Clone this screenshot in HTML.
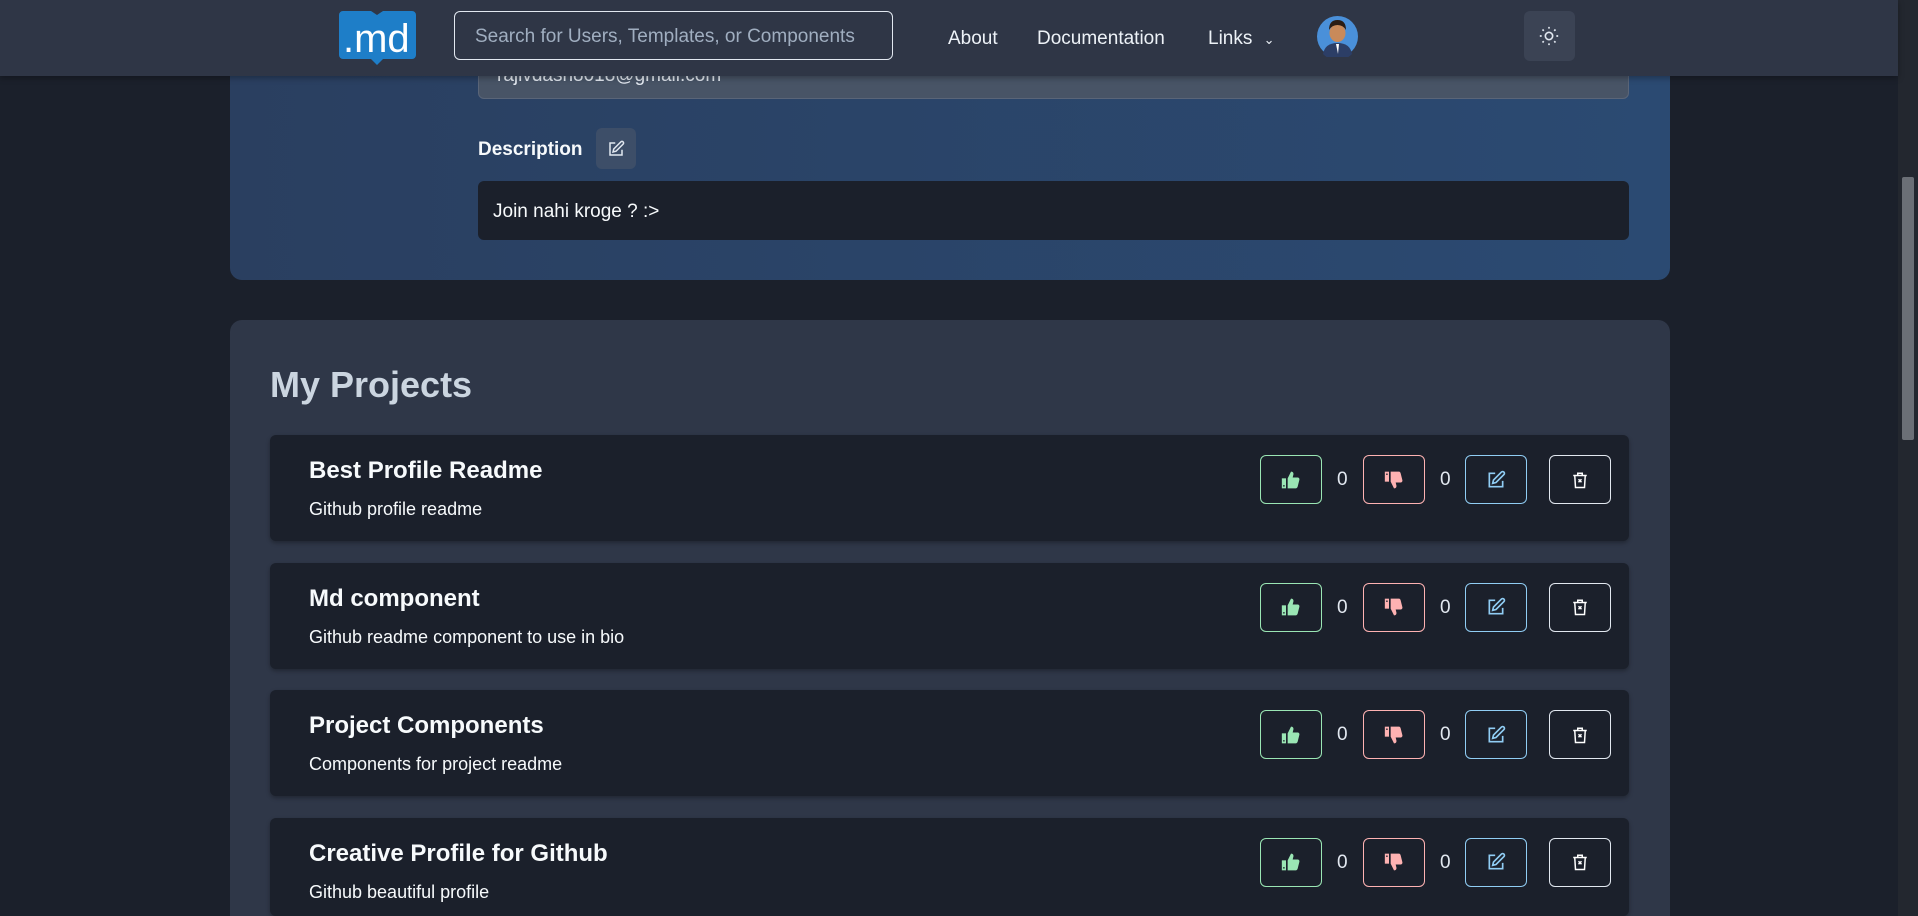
<!DOCTYPE html>
<html style="height:916px;overflow:hidden"><head><meta charset="utf-8"><style>
*{box-sizing:border-box;margin:0;padding:0}
html,body{overflow:hidden}
body{width:1918px;height:916px;overflow:hidden;background:#1b202b;font-family:"Liberation Sans",sans-serif;color:#fff;position:relative}
.hdr{position:absolute;left:0;top:0;width:1898px;height:76px;background:#2f3646;z-index:5;box-shadow:0 2px 6px rgba(0,0,0,.3)}
.abs{position:absolute}
.search{left:454px;top:11px;width:439px;height:49px;border:1.5px solid #e2e8f0;border-radius:6px;color:#a0aec0;font-size:19px;line-height:50px;padding-left:20px}
.nav{top:28px;font-size:19px;color:#edf2f7}
.theme{left:1524px;top:11px;width:51px;height:50px;background:#3b4354;border-radius:6px}
.card1{left:230px;top:-20px;width:1440px;height:300px;border-radius:12px;background:linear-gradient(90deg,#2a3f60,#2b4a72)}
.email{left:478px;top:40px;width:1151px;height:59px;background:#485466;border:1px solid #5a6578;border-radius:6px;font-size:19px;color:#e2e8f0;padding:24px 0 0 18px}
.card2{left:230px;top:320px;width:1440px;height:596px;border-radius:12px 12px 0 0;background:#2f3748}
.row{position:absolute;left:270px;width:1359px;height:106px;background:#1b202b;border-radius:6px;box-shadow:0 2px 4px rgba(0,0,0,.3)}
.row h3{position:absolute;left:39px;top:22px;font-size:24px;font-weight:bold;color:#f7fafc}
.row p{position:absolute;left:39px;top:64px;font-size:18px;color:#f7fafc}
.b{position:absolute;top:20px;width:62px;height:49px;border-radius:6px;border:1.2px solid;display:flex;align-items:center;justify-content:center}
.n{position:absolute;top:34px;font-size:19px;color:#e2e8f0}
.sb{left:1898px;top:0;width:20px;height:916px;background:#23272f}
.th{left:1902px;top:177px;width:12px;height:263px;background:#6b6f76;border-radius:2px}
</style></head><body>
<div class="abs card1"></div>
<div class="abs email">rajivdash8018@gmail.com</div>
<div class="abs" style="left:478px;top:139px;font-size:19px;font-weight:bold;color:#f7fafc">Description</div>
<div class="abs" style="left:596px;top:128px;width:40px;height:41px;background:#3d4e68;border-radius:6px;display:flex;align-items:center;justify-content:center"><svg width="18" height="18" viewBox="0 0 24 24" fill="none" stroke="#e2e8f0" stroke-width="2"><path d="M11 4H4v16h16v-7"/><path d="M18.5 2.5a2.1 2.1 0 013 3L12 15l-4 1 1-4z"/></svg></div>
<div class="abs" style="left:478px;top:181px;width:1151px;height:59px;background:#1b202b;border-radius:6px;font-size:19px;color:#f7fafc;padding:20px 0 0 15px">Join nahi kroge ? :&gt;</div>
<div class="abs card2"></div>
<div class="abs" style="left:270px;top:364px;font-size:36px;font-weight:bold;color:#cbd5e0">My Projects</div>

<div class="hdr">
<svg class="abs" style="left:339px;top:11px" width="77" height="54" viewBox="0 0 77 54"><path d="M4 0h28l6 4 6-4h29a4 4 0 014 4v40a4 4 0 01-4 4H44l-6 6-6-6H4a4 4 0 01-4-4V4a4 4 0 014-4z" fill="#1e7ec8"/><text x="4" y="41" font-family="Liberation Sans" font-size="40" fill="#fff">.md</text></svg>
<div class="abs search">Search for Users, Templates, or Components</div>
<div class="abs nav" style="left:948px">About</div>
<div class="abs nav" style="left:1037px">Documentation</div>
<div class="abs nav" style="left:1208px">Links <span style="font-size:13px;margin-left:6px">&#8964;</span></div>
<svg class="abs" style="left:1317px;top:16px" width="41" height="41" viewBox="0 0 41 41"><circle cx="20.5" cy="20.5" r="20.5" fill="#4a90d9"/><ellipse cx="20.5" cy="17" rx="8" ry="9" fill="#c98a5a"/><path d="M12 14q0-10 8.5-10T29 14q-3-5-8.5-5T12 14z" fill="#2b1d14"/><path d="M6 38q2-11 14.5-11T35 38a20 20 0 01-29 0z" fill="#2c3e66"/><path d="M19 28h3l-1 10z" fill="#fff"/></svg>
<div class="abs theme"><svg style="margin:14px" width="22" height="22" viewBox="0 0 24 24" fill="none" stroke="#e2e8f0" stroke-width="1.8"><circle cx="12" cy="12" r="4"/><path d="M12 2v2M12 20v2M2 12h2M20 12h2M4.9 4.9l1.4 1.4M17.7 17.7l1.4 1.4M4.9 19.1l1.4-1.4M17.7 6.3l1.4-1.4"/></svg></div>
</div>

<div id="rows"></div>
<script>
var d=[["Best Profile Readme","Github profile readme"],["Md component","Github readme component to use in bio"],["Project Components","Components for project readme"],["Creative Profile for Github","Github beautiful profile"]];
var up='<svg width="20" height="20" viewBox="0 0 24 24" fill="#9ae6b4"><rect x="1" y="10" width="5" height="12"/><path d="M8 10l4-8c2 0 3 1 3 3l-1 4h6c1.5 0 2.5 1.5 2 3l-2 8c-.4 1-1 2-2 2H8z"/><circle cx="3.5" cy="19" r="1" fill="#1b202b"/></svg>';
var dn='<svg width="20" height="20" viewBox="0 0 24 24" fill="#feb2b2" transform="scale(1,-1)"><rect x="1" y="10" width="5" height="12"/><path d="M8 10l4-8c2 0 3 1 3 3l-1 4h6c1.5 0 2.5 1.5 2 3l-2 8c-.4 1-1 2-2 2H8z"/><circle cx="3.5" cy="19" r="1" fill="#1b202b"/></svg>';
var ed='<svg width="20" height="20" viewBox="0 0 24 24" fill="none" stroke="#90cdf4" stroke-width="2"><path d="M11 4H4v16h16v-7"/><path d="M18.5 2.5a2.1 2.1 0 013 3L12 15l-4 1 1-4z"/></svg>';
var tr='<svg width="18" height="18" viewBox="0 0 24 24" fill="none" stroke="#fff" stroke-width="2"><path d="M3 6h18M9 6V3h6v3M5 6l1 16h12l1-16"/><path d="M10 11l4 4M14 11l-4 4"/></svg>';
var h='';
d.forEach(function(r,i){var t=435+i*127.5;var hh=(i==3)?(916-t):106;
h+='<div class="row" style="top:'+t+'px;height:'+hh+'px"><h3>'+r[0]+'</h3><p>'+r[1]+'</p>'+
'<div class="b" style="left:990px;border-color:#9ae6b4">'+up+'</div><div class="n" style="left:1067px">0</div>'+
'<div class="b" style="left:1093px;border-color:#feb2b2">'+dn+'</div><div class="n" style="left:1170px">0</div>'+
'<div class="b" style="left:1195px;border-color:#90cdf4">'+ed+'</div>'+
'<div class="b" style="left:1279px;border-color:#e2e8f0">'+tr+'</div></div>';});
document.getElementById('rows').innerHTML=h;
</script>
<div class="abs sb"></div><div class="abs th"></div>
</body></html>
